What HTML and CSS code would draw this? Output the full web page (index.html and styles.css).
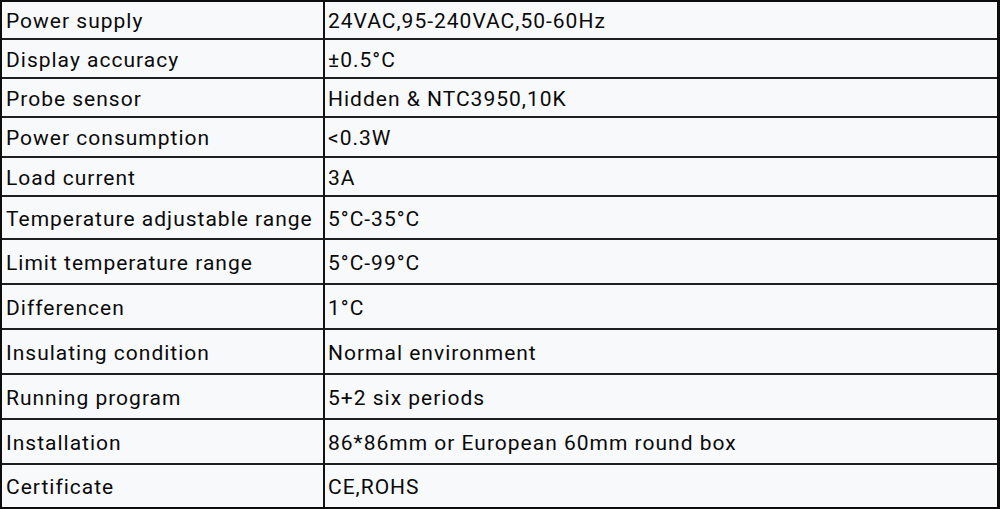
FILE: index.html
```html
<!DOCTYPE html>
<html>
<head>
<meta charset="utf-8">
<link rel="stylesheet" href="styles.css">
</head>
<body>
<div class="spec">
  <div class="cell key">Power supply</div><div class="cell val">24VAC,95-240VAC,50-60Hz</div>
  <div class="cell key">Display accuracy</div><div class="cell val">±0.5°C</div>
  <div class="cell key">Probe sensor</div><div class="cell val">Hidden &amp; NTC3950,10K</div>
  <div class="cell key">Power consumption</div><div class="cell val">&lt;0.3W</div>
  <div class="cell key">Load current</div><div class="cell val">3A</div>
  <div class="cell key">Temperature adjustable range</div><div class="cell val">5°C-35°C</div>
  <div class="cell key">Limit temperature range</div><div class="cell val">5°C-99°C</div>
  <div class="cell key">Differencen</div><div class="cell val">1°C</div>
  <div class="cell key">Insulating condition</div><div class="cell val">Normal environment</div>
  <div class="cell key">Running program</div><div class="cell val">5+2 six periods</div>
  <div class="cell key">Installation</div><div class="cell val">86*86mm or European 60mm round box</div>
  <div class="cell key last">Certificate</div><div class="cell val last">CE,ROHS</div>
</div>
</body>
</html>
```

FILE: styles.css
```css
html, body {
  margin: 0;
  padding: 0;
  background: #f8f9fb;
}
.spec {
  box-sizing: border-box;
  width: 1000px;
  height: 509px;
  border: 2px solid #0d0d0d;
  border-right-width: 3px;
  display: grid;
  grid-template-columns: 323px 1fr;
  grid-template-rows: 38px 39px 39px 40px 39px 43px 45px 45px 45px 45px 45px 42px;
  background: #f8f9fb;
  font-family: Roboto, "Liberation Sans", sans-serif;
  font-size: 21px;
  font-weight: 400;
  color: #0a0a0a;
}
.cell {
  box-sizing: border-box;
  display: flex;
  align-items: center;
  padding: 2px 0 0 4px;
  border-bottom: 2px solid #1e1e1e;
  white-space: nowrap;
  letter-spacing: 1px;
}
.key {
  border-right: 2px solid #111;
}
.val {
  padding-left: 3px;
}
.cell.last {
  border-bottom: none;
}
```
